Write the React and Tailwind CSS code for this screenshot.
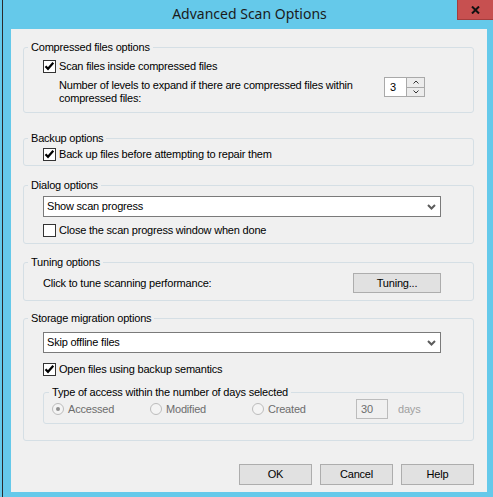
import { useState } from "react";

export default function App() {
  const [scanCompressed, setScanCompressed] = useState(true);
  const [backup, setBackup] = useState(true);
  const [closeWhenDone, setCloseWhenDone] = useState(false);
  const [backupSemantics, setBackupSemantics] = useState(true);
  const [levels, setLevels] = useState(3);

  return (
    <div className="flex h-[497px] w-[493px] bg-[#65c9ea] font-['Liberation_Sans',Arial,sans-serif] text-[11px] leading-[13px] tracking-[-0.2px] text-black">
      {/* Left window edge */}
      <div className="w-[2px]" />
      <div className="w-px bg-[#2b2b2b]" />

      <div className="flex flex-1 flex-col">
        {/* Title bar */}
        <div className="grid h-[29px] grid-cols-[36px_1fr_36px]">
          <div />
          <p className="pl-[3px] pt-[5px] text-center font-['Noto_Sans',sans-serif] text-[14px] leading-[18px] tracking-normal text-[#1b1b1b]">
            Advanced Scan Options
          </p>
          <button
            type="button"
            className="flex h-[20px] w-[36px] items-center justify-center border border-r-0 border-t-0 border-[#a33d3d] bg-[#c75050]"
          >
            <svg width="9" height="8" viewBox="0 0 9 8">
              <path d="M1 0.5 L8 7.5 M8 0.5 L1 7.5" stroke="#111" strokeWidth="2" />
            </svg>
          </button>
        </div>

        {/* Client area */}
        <div className="ml-[8px] flex h-[463px] w-[476px] flex-col bg-[#f0f0f0] pl-[12px] pr-[13px] pt-[12px]">
          <Group title="Compressed files options" className="pb-[7px]">
            <div className="pl-[15px]">
              <CheckRow
                className="mt-[6px]"
                checked={scanCompressed}
                onChange={setScanCompressed}
                label="Scan files inside compressed files"
              />
              <div className="mt-[4px] flex pl-[16px]">
                <p className="w-[325px] pt-[2px]">
                  Number of levels to expand if there are compressed files within
                  <br />
                  compressed files:
                </p>
                <Spinner value={levels} onChange={setLevels} />
              </div>
            </div>
          </Group>

          <Group title="Backup options" className="mt-[19px] pb-[4px]">
            <div className="pl-[15px]">
              <CheckRow
                className="mt-[3px]"
                checked={backup}
                onChange={setBackup}
                label="Back up files before attempting to repair them"
              />
            </div>
          </Group>

          <Group title="Dialog options" className="mt-[13px] pb-[6px]">
            <div className="pl-[15px]">
              <Dropdown className="mt-[4px]" value="Show scan progress" />
              <CheckRow
                className="mt-[7px]"
                checked={closeWhenDone}
                onChange={setCloseWhenDone}
                label="Close the scan progress window when done"
              />
            </div>
          </Group>

          <Group title="Tuning options" className="mt-[12px] pb-[7px]">
            <div className="mt-[4px] flex items-center pl-[15px]">
              <p className="w-[310px]">Click to tune scanning performance:</p>
              <PushButton className="h-[20px] w-[88px]">Tuning...</PushButton>
            </div>
          </Group>

          <Group title="Storage migration options" className="mt-[11px] pb-[16px]">
            <div className="pl-[15px]">
              <Dropdown className="mt-[7px]" value="Skip offline files" />
              <CheckRow
                className="mt-[10px]"
                checked={backupSemantics}
                onChange={setBackupSemantics}
                label="Open files using backup semantics"
              />
              <fieldset className="mt-[10px] w-[421px] rounded-[3px] border border-[#d5dfe5] pb-[4px] pl-[5px]">
                <legend className="px-[3px]">Type of access within the number of days selected</legend>
                <div className="flex items-center text-[#6d6d6d]">
                  <Radio className="w-[101px] pl-[3px]" label="Accessed" selected />
                  <Radio className="w-[102px]" label="Modified" />
                  <Radio className="w-[104px]" label="Created" />
                  <div className="flex h-[20px] w-[32px] items-center border border-[#bcbcbc] pl-[4px]">30</div>
                  <span className="ml-[10px] text-[#a0a0a0]">days</span>
                </div>
              </fieldset>
            </div>
          </Group>

          {/* Dialog buttons */}
          <div className="mt-[23px] flex justify-end gap-[8px]">
            <PushButton className="h-[21px] w-[73px] border-[#3c7fb1]">OK</PushButton>
            <PushButton className="h-[21px] w-[73px]">Cancel</PushButton>
            <PushButton className="h-[21px] w-[73px]">Help</PushButton>
          </div>
        </div>
      </div>
    </div>
  );
}

function Group({ title, className, children }) {
  return (
    <fieldset className={`rounded-[3px] border border-[#d5dfe5] pl-[4px] ${className}`}>
      <legend className="px-[3px]">{title}</legend>
      {children}
    </fieldset>
  );
}

function CheckRow({ checked, onChange, label, className }) {
  return (
    <label className={`flex items-center gap-[3px] ${className}`}>
      <span
        onClick={() => onChange(!checked)}
        className="flex h-[13px] w-[13px] items-center justify-center border border-[#333] bg-white"
      >
        {checked && (
          <svg width="11" height="11" viewBox="0 0 11 11">
            <path d="M1.5 5.2 L4 7.8 L9.3 1.8" fill="none" stroke="#000" strokeWidth="2.2" />
          </svg>
        )}
      </span>
      <span>{label}</span>
    </label>
  );
}

function Dropdown({ value, className }) {
  return (
    <div className={`flex h-[21px] w-[398px] items-center justify-between border border-[#7a7a7a] bg-white pl-[3px] pr-[4px] ${className}`}>
      <span>{value}</span>
      <svg width="9" height="6" viewBox="0 0 9 6">
        <path d="M1 1 L4.5 4.5 L8 1" fill="none" stroke="#5c5c5c" strokeWidth="2" />
      </svg>
    </div>
  );
}

function Spinner({ value, onChange }) {
  return (
    <div className="flex h-[20px]">
      <div className="flex w-[23px] items-center border border-[#a9a9a9] bg-white pl-[5px]">{value}</div>
      <div className="flex w-[18px] flex-col border border-l-0 border-[#a9a9a9]">
        <button
          type="button"
          onClick={() => onChange(value + 1)}
          className="flex flex-1 items-center justify-center border-b border-[#a9a9a9] bg-[#ececec]"
        >
          <svg width="6" height="4" viewBox="0 0 6 4">
            <path d="M0.5 3.5 L3 1 L5.5 3.5" fill="none" stroke="#333" strokeWidth="1" />
          </svg>
        </button>
        <button
          type="button"
          onClick={() => onChange(Math.max(0, value - 1))}
          className="flex flex-1 items-center justify-center bg-[#ececec]"
        >
          <svg width="6" height="4" viewBox="0 0 6 4">
            <path d="M0.5 0.5 L3 3 L5.5 0.5" fill="none" stroke="#333" strokeWidth="1" />
          </svg>
        </button>
      </div>
    </div>
  );
}

function Radio({ label, selected, className }) {
  return (
    <div className={`flex items-center gap-[4px] ${className}`}>
      <span className="flex h-[12px] w-[12px] items-center justify-center rounded-full border border-[#bcbcbc] bg-[#f4f4f4]">
        {selected && <span className="h-[4px] w-[4px] rounded-full bg-[#8f8f8f]" />}
      </span>
      <span>{label}</span>
    </div>
  );
}

function PushButton({ className, children }) {
  return (
    <button
      type="button"
      className={`flex items-center justify-center border border-[#adadad] bg-[#e1e1e1] leading-[13px] ${className}`}
    >
      {children}
    </button>
  );
}
